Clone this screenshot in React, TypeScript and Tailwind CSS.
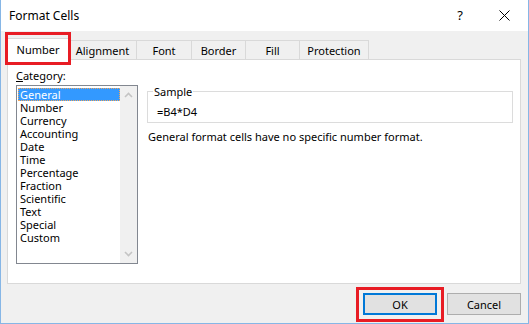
import React from 'react'

const tabs = [
  { name: 'Alignment', w: 'w-[68px]' },
  { name: 'Font', w: 'w-[55px]' },
  { name: 'Border', w: 'w-[54px]' },
  { name: 'Fill', w: 'w-[54px]' },
  { name: 'Protection', w: 'w-[69px]' },
]

const categories = [
  'General',
  'Number',
  'Currency',
  'Accounting',
  'Date',
  'Time',
  'Percentage',
  'Fraction',
  'Scientific',
  'Text',
  'Special',
  'Custom',
]

const Chevron: React.FC<{ up?: boolean }> = ({ up }) => (
  <svg width="9" height="6" viewBox="0 0 9 6" className="block">
    <path
      d={up ? 'M1 5 L4.5 1.5 L8 5' : 'M1 1 L4.5 4.5 L8 1'}
      fill="none"
      stroke="#c4c4c4"
      strokeWidth="1.6"
    />
  </svg>
)

const App: React.FC = () => {
  return (
    <div className="w-[529px] h-[324px] bg-[#f0f0f0] border-x border-b border-[#86b6e6] flex flex-col text-[11px] text-black font-['Noto_Sans',sans-serif] overflow-hidden">
      {/* title bar */}
      <div className="h-[31px] bg-white flex items-center shrink-0">
        <span className="ml-[8px] text-[12px] leading-[15px]">Format Cells</span>
        <span className="ml-auto mr-[11px] w-[20px] text-center text-[13px] leading-[15px]">?</span>
        <div className="w-[47px] flex justify-center">
          <svg width="11" height="11" viewBox="0 0 11 11">
            <path d="M0.5 0.5 L10.5 10.5 M10.5 0.5 L0.5 10.5" stroke="#000" strokeWidth="1" />
          </svg>
        </div>
      </div>

      {/* tabs */}
      <div className="flex items-end h-[21px] mt-[7px] ml-[6px] shrink-0">
        <div className="relative z-10 w-[62px] h-[22px] -mb-px bg-white border-x border-t border-[#d9d9d9] flex items-center justify-center leading-[15px]">
          Number
          <div className="absolute -left-[3px] -top-[7px] w-[66px] h-[33px] border-[3px] border-[#e81c24]" />
        </div>
        {tabs.map((t) => (
          <div
            key={t.name}
            className={`${t.w} h-[19px] border-t border-r border-[#d9d9d9] flex items-center justify-center leading-[15px]`}
          >
            {t.name}
          </div>
        ))}
      </div>

      {/* panel */}
      <div className="ml-[6px] w-[514px] h-[225px] bg-white border border-[#d9d9d9] flex shrink-0">
        <div className="ml-[8px] mt-[8px] w-[122px] flex flex-col">
          <div className="leading-[15px]">
            <span className="underline">C</span>ategory:
          </div>
          <div className="mt-[2px] h-[179px] border border-[#828790] flex">
            <div className="flex-1 pt-[2px] pl-[1px]">
              {categories.map((c, i) => (
                <div
                  key={c}
                  className={
                    i === 0
                      ? 'h-[13px] leading-[11px] pl-[1px] bg-[#3399ff] text-white border border-dotted border-[#f2a65a]'
                      : 'h-[13px] leading-[13px] pl-[2px]'
                  }
                >
                  {c}
                </div>
              ))}
            </div>
            <div className="w-[17px] bg-[#f0f0f0] flex flex-col items-center justify-between py-[6px]">
              <Chevron up />
              <Chevron />
            </div>
          </div>
        </div>

        <div className="ml-[9px] w-[366px] flex flex-col">
          <fieldset className="mt-[24px] h-[39px] border border-[#dcdcdc] px-[5px] pb-[2px]">
            <legend className="px-[1px] leading-[15px]">Sample</legend>
            <div className="pl-[4px] mt-[5px] leading-[15px]">=B4*D4</div>
          </fieldset>
          <p className="mt-[6px] ml-px leading-[15px]">General format cells have no specific number format.</p>
        </div>
      </div>

      {/* buttons */}
      <div className="flex justify-end gap-[10px] mt-[9px] mr-[7px]">
        <div className="relative">
          <button className="w-[74px] h-[22px] bg-[#e1e1e1] border-2 border-[#0078d7] leading-[15px]">
            OK
          </button>
          <div className="absolute -left-[7px] -top-[6px] w-[88px] h-[35px] border-[3px] border-[#e81c24]" />
        </div>
        <button className="w-[74px] h-[22px] bg-[#e1e1e1] border border-[#adadad] leading-[15px]">
          Cancel
        </button>
      </div>
    </div>
  )
}

export default App
